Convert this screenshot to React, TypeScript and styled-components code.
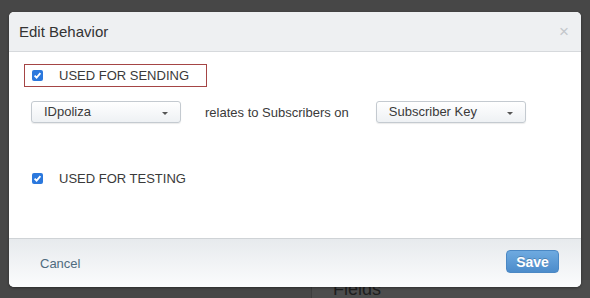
import styled, { createGlobalStyle } from 'styled-components';

const GlobalStyle = createGlobalStyle`
  html, body {
    margin: 0;
    padding: 0;
    background: #474747;
    font-family: Arial, 'Liberation Sans', sans-serif;
  }
`;

const Page = styled.div`
  position: relative;
  width: 590px;
  height: 298px;
  overflow: hidden;
  padding: 12px 9px 0 9px;
  box-sizing: border-box;
`;

const BehindPanel = styled.div`
  position: absolute;
  left: 311px;
  top: 280px;
  right: 0;
  bottom: 0;
  background: #4d4d4d;
  border-left: 1px solid #3e3e3e;
`;

const BehindText = styled.span`
  position: absolute;
  left: 333px;
  top: 279px;
  font-size: 18px;
  color: #1e1e1e;
`;

const Modal = styled.div`
  position: relative;
  z-index: 1;
  width: 572px;
  height: 275px;
  background: #fff;
  border-radius: 5px;
  overflow: hidden;
  display: flex;
  flex-direction: column;
  box-shadow: 0 1px 3px rgba(0, 0, 0, 0.4);
`;

const Header = styled.div`
  height: 39px;
  flex: none;
  display: flex;
  align-items: center;
  justify-content: space-between;
  padding: 0 12px 0 10px;
  background: #eef0f2;
  border-bottom: 1px solid #d6d9dc;
`;

const Title = styled.h1`
  margin: 0;
  font-size: 15px;
  font-weight: normal;
  color: #333;
`;

const Close = styled.span`
  font-size: 17px;
  line-height: 1;
  color: #c3c7cb;
`;

const Body = styled.div`
  flex: 1;
  display: flex;
  flex-direction: column;
  align-items: flex-start;
  padding: 12px 15px 0 15px;
`;

const CheckRow = styled.label<{ $outlined?: boolean; $top?: number }>`
  display: flex;
  align-items: center;
  gap: 16px;
  box-sizing: border-box;
  width: 183px;
  height: 23px;
  padding-left: 7px;
  margin-top: ${(p) => p.$top ?? 0}px;
  border: 1px solid ${(p) => (p.$outlined ? '#a54545' : 'transparent')};
  font-size: 13px;
  color: #3a3a3a;
  text-transform: uppercase;
  white-space: nowrap;
`;

const Box = styled.span`
  width: 11px;
  height: 11px;
  flex: none;
  border-radius: 2px;
  background: #2b78dd;
  display: flex;
  align-items: center;
  justify-content: center;
`;

const SelectRow = styled.div`
  display: flex;
  align-items: center;
  margin: 14px 0 0 7px;
  height: 22px;
`;

const Select = styled.div`
  width: 150px;
  height: 22px;
  box-sizing: border-box;
  display: flex;
  align-items: center;
  justify-content: space-between;
  padding: 0 12px 1px 12px;
  border: 1px solid #c4cad0;
  border-radius: 3px;
  background: linear-gradient(#ffffff, #eef1f4);
  box-shadow: 0 1px 1px rgba(0, 0, 0, 0.08);
  font-size: 13px;
  color: #3a3a3a;
`;

const Caret = styled.span`
  width: 0;
  height: 0;
  border-left: 3px solid transparent;
  border-right: 3px solid transparent;
  border-top: 3px solid #555;
  margin-top: 3px;
`;

const Relates = styled.span`
  margin: 0 27px 0 24px;
  font-size: 13px;
  color: #3a3a3a;
`;

const Footer = styled.div`
  height: 48px;
  flex: none;
  display: flex;
  align-items: center;
  justify-content: space-between;
  padding: 0 22px 0 31px;
  border-top: 1px solid #cfd3d6;
  background: linear-gradient(#e7eaed, #fbfcfd);
`;

const Cancel = styled.span`
  font-size: 13px;
  color: #4f6b7e;
`;

const SaveButton = styled.button`
  width: 53px;
  height: 23px;
  border: 1px solid #4b88c4;
  border-radius: 4px;
  background: linear-gradient(#6eaae0, #4c8ccb);
  color: #fff;
  font-family: inherit;
  font-size: 14px;
  font-weight: bold;
  text-shadow: 0 -1px 0 rgba(0, 0, 0, 0.2);
  padding: 0;
  margin-top: -3px;
`;

const Check = () => (
  <svg width="9" height="9" viewBox="0 0 9 9">
    <path d="M1.6 4.6 L3.6 6.6 L7.4 2.2" fill="none" stroke="#fff" strokeWidth="1.8" />
  </svg>
);

export default function App() {
  return (
    <Page>
      <GlobalStyle />
      <BehindPanel />
      <BehindText>Fields</BehindText>
      <Modal>
        <Header>
          <Title>Edit Behavior</Title>
          <Close>×</Close>
        </Header>
        <Body>
          <CheckRow $outlined>
            <Box>
              <Check />
            </Box>
            Used for sending
          </CheckRow>
          <SelectRow>
            <Select>
              IDpoliza
              <Caret />
            </Select>
            <Relates>relates to Subscribers on</Relates>
            <Select>
              Subscriber Key
              <Caret />
            </Select>
          </SelectRow>
          <CheckRow $top={44}>
            <Box>
              <Check />
            </Box>
            Used for testing
          </CheckRow>
        </Body>
        <Footer>
          <Cancel>Cancel</Cancel>
          <SaveButton>Save</SaveButton>
        </Footer>
      </Modal>
    </Page>
  );
}
